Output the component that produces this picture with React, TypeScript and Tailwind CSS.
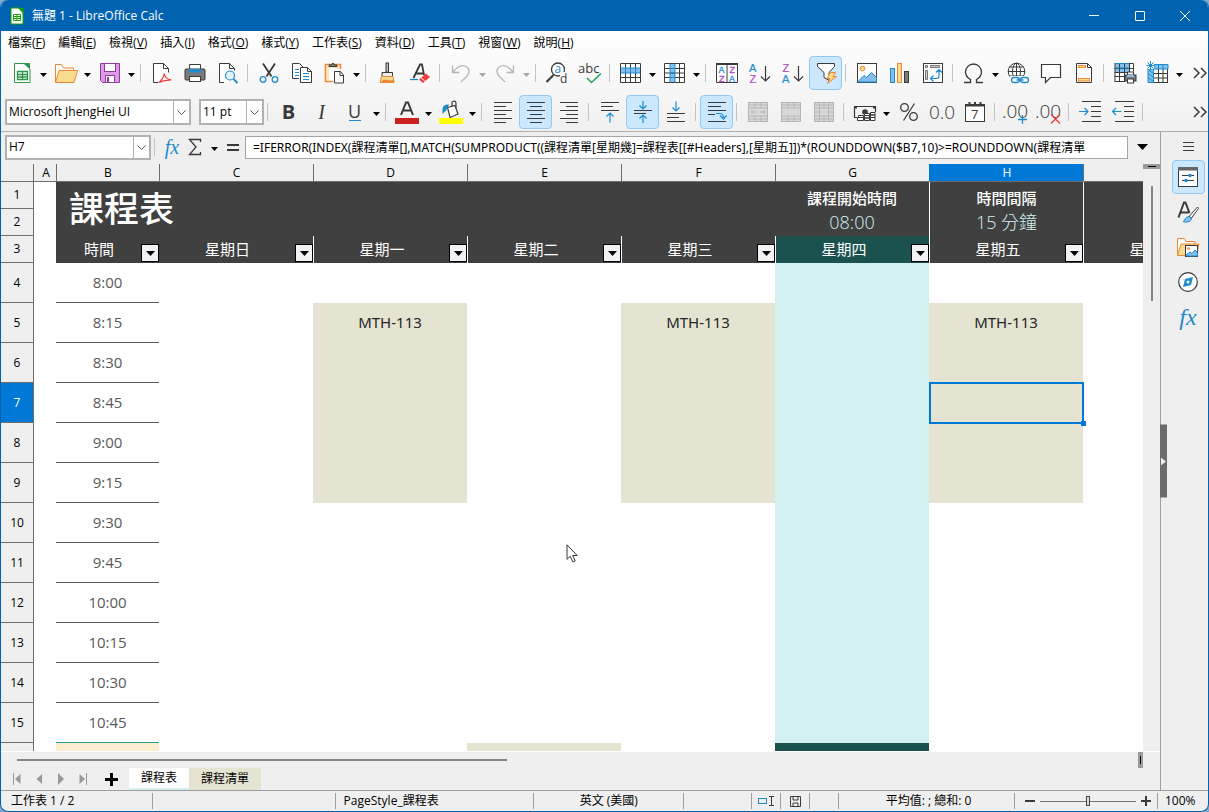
import React from "react";

const DARK = "#3a3a38";
const BLUE = "#1e8bcd";
const SKY = "#83beec";
const ORANGE = "#ed8733";
const SAND = "#f8db8f";
const RED = "#ed3d3b";
const PURPLE = "#b04bbf";
const GRAY = "#b5b5b5";

const FONT = "font-['Open_Sans','Noto_Sans_CJK_TC',sans-serif]";

function Icon({ children }: { children: React.ReactNode }) {
  return (
    <svg viewBox="0 0 24 24" className="h-6 w-6 shrink-0 overflow-visible" fill="none" aria-hidden="true">
      {children}
    </svg>
  );
}

const svgFont = { fontFamily: "'Open Sans', sans-serif" };
const letterFont = { fontFamily: "'Liberation Sans', sans-serif" };

/* ---------- standard toolbar icons ---------- */

const NewSheet = (
  <Icon>
    <path d="M4.500 2.500h9.500l6 5.500v13.500h-15.500z" fill="#fff" stroke="#2e9549" />
    <path d="M13.500 2h6.500v6z" fill="#2e9549" />
    <path d="M7.500 10.500h10v8h-10zM7.500 13.500h10M7.500 16h10M12.500 10.500v8" stroke="#2e9549" strokeWidth="1.300" />
  </Icon>
);
const Folder = (
  <Icon>
    <path d="M1.500 21V3.500h6l2 3.500h10v3" stroke={ORANGE} fill="#fff" />
    <path d="M1.500 21.500l3.500-12h18.500l-3.500 12z" fill={SAND} stroke={ORANGE} />
  </Icon>
);
const Save = (
  <Icon>
    <path d="M2.500 2.500h19v19h-17l-2-2z" fill="#dd9be8" stroke="#95389f" />
    <rect x="6.500" y="2.500" width="11" height="8" fill="#fff" stroke="#95389f" />
    <rect x="7.500" y="14.500" width="9" height="7" fill="#fff" stroke="#95389f" />
    <rect x="9" y="16" width="2" height="5" fill="#95389f" />
  </Icon>
);
const Pdf = (
  <Icon>
    <path d="M8 21.500H3.500v-19h10l5 5v4" fill="#fff" stroke={DARK} />
    <path d="M13.500 2.500v5h5" stroke={DARK} />
    <path d="M8.500 21.500c3-1.500 5.500-6 5.800-9 .3 3.500 2.500 5.800 7 6.300-5 0-9 1-12.800 2.700z" stroke={RED} strokeWidth="1.200" />
  </Icon>
);
const Printer = (
  <Icon>
    <path d="M6.500 8V3.500h11V8" fill="#fff" stroke={DARK} />
    <rect x="2" y="8" width="20" height="11" rx="1" fill="#7b7b7b" stroke={DARK} />
    <rect x="6" y="8" width="12" height="3.500" fill={BLUE} />
    <rect x="6.500" y="15.500" width="11" height="5" fill="#fff" stroke={DARK} />
  </Icon>
);
const Preview = (
  <Icon>
    <path d="M8 21.500H3.500v-19h10l5 5v2" fill="#fff" stroke={DARK} />
    <path d="M13.500 2.500v5h5" stroke={DARK} />
    <circle cx="14" cy="14.500" r="4.500" stroke={BLUE} fill="#e6f2fb" strokeWidth="1.200" />
    <path d="M17.500 18l4 4" stroke={BLUE} strokeWidth="1.800" />
  </Icon>
);
const Cut = (
  <Icon>
    <path d="M6 2.500l8.500 13M18 2.500l-8.500 13" stroke={DARK} strokeWidth="1.800" />
    <circle cx="6" cy="18.500" r="2.800" stroke={BLUE} strokeWidth="1.300" />
    <circle cx="18" cy="18.500" r="2.800" stroke={BLUE} strokeWidth="1.300" />
  </Icon>
);
const Copy = (
  <Icon>
    <path d="M9 17.500H2.500v-15h7l4 4V7" fill="#fff" stroke={DARK} />
    <path d="M5 8.500h4M5 11.500h4M5 14.500h4" stroke={BLUE} />
    <path d="M10.500 6.500h7l4 4v11h-11z" fill="#fff" stroke={DARK} />
    <path d="M17.500 6.500v4h4" stroke={DARK} />
    <path d="M13 12.500h6M13 15.500h6M13 18.500h6" stroke={BLUE} />
  </Icon>
);
const Paste = (
  <Icon>
    <path d="M10 20.500H2.500v-17H17.500V8" fill="#fff" stroke={ORANGE} strokeWidth="1.600" />
    <path d="M5 20V6h10v2" fill="#fff" stroke={SAND} strokeWidth="1.400" />
    <path d="M6 5.500h8V4h-2.500a1.500 1.500 0 0 0-3 0H6z" fill="#8a8a8a" stroke={DARK} />
    <path d="M11.500 10.500h6l3 3.500v8h-9z" fill="#fff" stroke={DARK} />
    <path d="M17 10.500v4h3.500" stroke={DARK} />
  </Icon>
);
const Brush = (
  <Icon>
    <rect x="11" y="2" width="2.500" height="9" fill="#bbb" stroke={DARK} />
    <path d="M7 15.500v-4h10.500v4z" fill="#eee" stroke={DARK} />
    <path d="M6.500 15.500h11.500l1 6H5z" fill={SAND} stroke={ORANGE} />
    <path d="M8 19c4-1 7 2 11-.500v3H6z" fill={ORANGE} />
  </Icon>
);
const ClearFormat = (
  <Icon>
    <path d="M5.500 17L12 3.500h2L16 14M8 12.500h7.500" stroke={DARK} strokeWidth="1.800" />
    <path d="M2 18.500h8" stroke={BLUE} strokeWidth="1.300" />
    <path d="M11 18.500l7-6 4 3.500-7 6z" fill={RED} />
    <path d="M13 16.800l4 3.400" stroke="#fff" />
  </Icon>
);
const Undo = (
  <Icon>
    <path d="M3.500 4.500v7h7M4 11C8 6 12 3.500 16 5c5 2 5 6.500 2 10l-6 6" stroke={GRAY} strokeWidth="1.300" />
  </Icon>
);
const Redo = (
  <Icon>
    <path d="M20.500 4.500v7h-7M20 11C16 6 12 3.500 8 5c-5 2-5 6.500-2 10l6 6" stroke={GRAY} strokeWidth="1.300" />
  </Icon>
);
const Find = (
  <Icon>
    <circle cx="13" cy="8.500" r="6.500" stroke={DARK} strokeWidth="1.300" fill="#fff" />
    <path d="M8.500 14l-7 7" stroke={DARK} strokeWidth="2.200" />
    <text x="9.500" y="12" fontSize="12" fill={BLUE} style={svgFont}>a</text>
    <rect x="15" y="11" width="8" height="11" fill="#fbfbfb" />
    <text x="15" y="22" fontSize="12" fill={DARK} style={svgFont}>d</text>
  </Icon>
);
const Spell = (
  <Icon>
    <text x="0" y="12" fontSize="13" fill={DARK} style={svgFont}>abc</text>
    <path d="M9 17l4.500 4.500L23 12.500" stroke="#21a85a" strokeWidth="1.600" />
  </Icon>
);
const RowIcon = (
  <Icon>
    <rect x="1.500" y="2.500" width="20" height="19" fill="#fff" />
    <rect x="2" y="7" width="20" height="5" fill={SKY} />
    <path d="M1.500 2.500h20v19h-20zM1.500 16.500h20M6.500 2.500v19M11.500 2.500v19M16.500 2.500v19" stroke={DARK} />
    <path d="M1.500 7h20M1.500 12h20M6.500 7v5M11.500 7v5M16.500 7v5" stroke={BLUE} />
  </Icon>
);
const ColIcon = (
  <Icon>
    <rect x="1.500" y="2.500" width="20" height="19" fill="#fff" />
    <rect x="7" y="3" width="5" height="18" fill={SKY} />
    <path d="M1.500 2.500h20v19h-20zM1.500 7.500h20M1.500 12h20M1.500 16.500h20M16.500 2.500v19" stroke={DARK} />
    <path d="M7 2.500v19M12 2.500v19M7 7.500h5M7 12h5M7 16.500h5" stroke={BLUE} />
  </Icon>
);
const SortIcon = (
  <Icon>
    <path d="M1.500 2.500h21v19h-21z" fill="#fff" stroke={DARK} />
    <path d="M1 3h22" stroke={DARK} strokeWidth="2" />
    <path d="M12 2.500v19" stroke={DARK} />
    <text x="3.500" y="12" fontSize="9" fill={BLUE} stroke={BLUE} strokeWidth=".3" style={letterFont}>A</text>
    <text x="4" y="20.500" fontSize="9" fill={PURPLE} stroke={PURPLE} strokeWidth=".3" style={letterFont}>Z</text>
    <text x="14.500" y="12" fontSize="9" fill={PURPLE} stroke={PURPLE} strokeWidth=".3" style={letterFont}>Z</text>
    <text x="14" y="20.500" fontSize="9" fill={BLUE} stroke={BLUE} strokeWidth=".3" style={letterFont}>A</text>
  </Icon>
);
const SortAsc = (
  <Icon>
    <text x="1" y="10.500" fontSize="11" fill={BLUE} stroke={BLUE} strokeWidth=".2" style={letterFont}>A</text>
    <text x="1.500" y="21.500" fontSize="11" fill={PURPLE} stroke={PURPLE} strokeWidth=".2" style={letterFont}>Z</text>
    <path d="M17.500 5v15M13 15.500l4.500 4.500 4.500-4.500" stroke={DARK} strokeWidth="1.200" />
  </Icon>
);
const SortDesc = (
  <Icon>
    <text x="1.500" y="10.500" fontSize="11" fill={PURPLE} stroke={PURPLE} strokeWidth=".2" style={letterFont}>Z</text>
    <text x="1" y="21.500" fontSize="11" fill={BLUE} stroke={BLUE} strokeWidth=".2" style={letterFont}>A</text>
    <path d="M17.500 5v15M13 15.500l4.500 4.500 4.500-4.500" stroke={DARK} strokeWidth="1.200" />
  </Icon>
);
const Filter = (
  <Icon>
    <path d="M3.500 2.500h17v3l-5.500 6v8l-5-3v-5l-6.500-6z" fill="#fff" stroke={DARK} />
    <path d="M16.500 11.500h5l-2.500 4h3.500l-9 7 2.500-5h-3z" fill={SAND} stroke={ORANGE} />
  </Icon>
);
const Picture = (
  <Icon>
    <rect x="2.500" y="2.500" width="19" height="19" fill="#fff" stroke={DARK} />
    <circle cx="7.500" cy="7.500" r="2.300" fill={SAND} stroke={ORANGE} />
    <path d="M3 20.500l6-6 2.500 2 5-5 5 5v4.500H3z" fill={SKY} stroke={BLUE} />
  </Icon>
);
const Chart = (
  <Icon>
    <rect x="2.500" y="7.500" width="4" height="14" fill={SKY} stroke={BLUE} />
    <rect x="9.500" y="2.500" width="4" height="19" fill={SAND} stroke={ORANGE} />
    <rect x="16.500" y="10.500" width="4" height="11" fill="#7b7b7b" stroke={DARK} />
  </Icon>
);
const Pivot = (
  <Icon>
    <rect x="2.500" y="2.500" width="19" height="19" fill="#fff" stroke={DARK} />
    <path d="M4.500 4.500h2v2h-2zM9.500 4.500h9v2h-9zM4.500 9.500h2v9h-2z" fill="#ccc" stroke="#777" />
    <path d="M15 11.500l3-3 3 3M18 9v6c0 1.500-1 2.500-2.500 2.500H9.500M12.500 14.500l-3 3 3 3" stroke={BLUE} strokeWidth="1.200" />
  </Icon>
);
const Omega = (
  <Icon>
    <path d="M2 21.500h6.500v-3C5 16.500 3.500 14 3.500 11a8 8 0 0 1 16 0c0 3-1.500 5.500-5 7.500v3H21" stroke={DARK} strokeWidth="1.300" />
  </Icon>
);
const Link = (
  <Icon>
    <circle cx="10.500" cy="10.500" r="8.300" fill="#fff" stroke={DARK} />
    <ellipse cx="10.500" cy="10.500" rx="4" ry="8.300" stroke={DARK} />
    <path d="M10.500 2v17M2 10.500h17M3.500 6h14M3.500 15h14" stroke={DARK} />
    <rect x="4" y="15" width="20" height="9" fill="#f9f9f9" />
    <rect x="5.500" y="16.500" width="8" height="5" rx="2.500" stroke={BLUE} strokeWidth="1.300" />
    <rect x="14.500" y="16.500" width="8" height="5" rx="2.500" stroke={BLUE} strokeWidth="1.300" />
    <path d="M10.500 19h7" stroke={BLUE} strokeWidth="1.300" />
  </Icon>
);
const Comment = (
  <Icon>
    <path d="M2.500 3.500h19v13H11.500l-5 5v-5h-4z" fill="#fff" stroke={DARK} strokeWidth="1.200" />
  </Icon>
);
const HeaderFooter = (
  <Icon>
    <path d="M4.500 2.500h11l4 4v15h-15z" fill="#fff" stroke={DARK} />
    <path d="M15.500 2.500v4h4" stroke={DARK} />
    <rect x="6.500" y="4.500" width="7" height="2" fill={SAND} stroke={ORANGE} />
    <rect x="6.500" y="17.500" width="11" height="2.500" fill={SAND} stroke={ORANGE} />
  </Icon>
);
const PrintArea = (
  <Icon>
    <rect x="2" y="2" width="18" height="18" fill="#fff" />
    <rect x="2" y="2" width="14" height="9" fill={SKY} />
    <path d="M2 2.500h18.500v8M1.500 7.500h19M1.500 11.500h19M1.500 15.500h10M2 20.500h10M2 2v19M6.500 2v19M11.500 2v19M16.500 2v9" stroke={DARK} />
    <path d="M2 2.500h14M2 7h14" stroke={BLUE} />
    <path d="M14.500 14v-3h6v3" fill="#fff" stroke={DARK} />
    <rect x="12" y="14" width="11" height="6" fill="#7b7b7b" stroke={DARK} />
    <rect x="14" y="14" width="7" height="2" fill={SKY} />
    <rect x="14.500" y="18" width="6" height="4" fill="#fff" stroke={DARK} />
  </Icon>
);
const Freeze = (
  <Icon>
    <rect x="2.500" y="3.500" width="19" height="18" fill="#fff" stroke={DARK} />
    <path d="M8 12.500h13M8 17h13M12.500 8v13M17 8v13" stroke={DARK} />
    <path d="M8 3.500h14V8H8zM2 8h5.500v13.500H2z" fill={SKY} stroke={BLUE} />
    <path d="M12.500 3.500V8M17 3.500V8M2 12.500l5.500 4M2 16.500l5.500 4M2 8.500l5.500 4" stroke={BLUE} />
    <rect x="0" y="0" width="8" height="8" fill="#fbfbfb" />
    <path d="M4.500 0v9M.5 4.500h8M1.500 1.500l6 6M7.500 1.500l-6 6" stroke={BLUE} />
  </Icon>
);

/* ---------- formatting toolbar icons ---------- */

const FontColor = (
  <Icon>
    <path d="M6 15L11 2.500h2L18 15M8 10.500h8" stroke={DARK} strokeWidth="2" />
    <rect x="0" y="18" width="24" height="6" fill="#c9211e" />
  </Icon>
);
const FillColor = (
  <Icon>
    <path d="M8.500 7.500l7.500-2 3 8.500-8 3.500z" fill="#fff" stroke={DARK} strokeWidth="1.200" />
    <path d="M13 7V3.500a2 2 0 0 1 4-.5v5" stroke={DARK} strokeWidth="1.200" />
    <path d="M10 4.500C6 4 3.500 6 3.500 9v5l3.500-3.500L9 7z" fill={BLUE} />
    <rect x="0" y="18" width="24" height="6" fill="#ffff00" />
  </Icon>
);
function Lines({ rows }: { rows: [number, number][] }) {
  return (
    <Icon>
      {rows.map(([x1, x2], i) => (
        <path key={i} d={`M${x1} ${2.5 + i * 4}H${x2}`} stroke={DARK} />
      ))}
    </Icon>
  );
}
const AlignLeft = <Lines rows={[[3, 21], [3, 15], [3, 21], [3, 15], [3, 21], [3, 15]]} />;
const AlignCenter = <Lines rows={[[3, 21], [6, 18], [3, 21], [6, 18], [3, 21], [6, 18]]} />;
const AlignRight = <Lines rows={[[3, 21], [9, 21], [3, 21], [9, 21], [3, 21], [9, 21]]} />;
const AlignTop = (
  <Icon>
    <path d="M3 2.500h18M3 6.500h12M3 10.500h18" stroke={DARK} />
    <path d="M12 22.500V13M8.500 16.500L12 13l3.500 3.500" stroke={BLUE} strokeWidth="1.200" />
  </Icon>
);
const AlignMiddle = (
  <Icon>
    <path d="M3 10.500h18M3 13.500h12" stroke={DARK} />
    <path d="M12 1v7.500M8.500 5.500L12 9l3.500-3.500M12 23v-7.500M8.500 18.500L12 15l3.500 3.500" stroke={BLUE} strokeWidth="1.200" />
  </Icon>
);
const AlignBottom = (
  <Icon>
    <path d="M3 13.500h18M3 17.500h12M3 21.500h18" stroke={DARK} />
    <path d="M12 1.500V11M8.500 7.500L12 11l3.500-3.500" stroke={BLUE} strokeWidth="1.200" />
  </Icon>
);
const Wrap = (
  <Icon>
    <path d="M3 2.500h18M3 6.500h13M3 10.500h18M3 14.500h7M3 21.500h18" stroke={DARK} />
    <path d="M11 13.500h4c2.500 0 3.500 1.500 3.500 5M15 15.500l3.500 3.500 3-3.500" stroke={BLUE} strokeWidth="1.200" />
  </Icon>
);
const Merge1 = (
  <Icon>
    <rect x="2.500" y="2.500" width="19" height="19" fill="#d9d9d9" stroke={GRAY} />
    <path d="M2.500 8h19M2.500 16h19M9 2.500V8M15 2.500V8M9 16v5.500M15 16v5.500M2.500 5h19M2.500 19h19M5 12h5M14 12h5M7 10l-2 2 2 2M17 10l2 2-2 2" stroke={GRAY} />
  </Icon>
);
const Merge2 = (
  <Icon>
    <rect x="2.500" y="2.500" width="19" height="19" fill="#d9d9d9" stroke={GRAY} />
    <path d="M2.500 8h19M2.500 16h19M9 2.500V8M15 2.500V8M9 16v5.500M15 16v5.500M2.500 5h19M2.500 19h19" stroke={GRAY} />
  </Icon>
);
const Merge3 = (
  <Icon>
    <rect x="2.500" y="2.500" width="19" height="19" fill="#d9d9d9" stroke={GRAY} />
    <path d="M2.500 8h19M2.500 16h19M2.500 12h5M16.500 12h5M7.500 2.500v19M16.500 2.500v19M12 2.500V8M12 16v5.500M2.500 5h19M2.500 19h19" stroke={GRAY} />
  </Icon>
);
const Currency = (
  <Icon>
    <path d="M4 17.500H1.500v-11h21V12" stroke={DARK} strokeWidth="1.200" />
    <circle cx="12" cy="12" r="2.800" fill={DARK} />
    <path d="M1 6h3v2.500H1zM20 6h3v2.500h-3z" fill={DARK} />
    <path d="M5.500 15.500h5v2h-5zM4.500 17.500h6v3h-6zM11.500 13.500h5v2h-5zM11.500 15.500h5v2.500h-5zM11.500 18h5v2.500h-5zM17.500 12.500h4.500v2.500h-4.500zM17.500 15h4.500v2.500h-4.500zM17.500 17.500h4.500v3h-4.500z" fill="#fff" stroke={DARK} />
  </Icon>
);
const Percent = (
  <Icon>
    <circle cx="7.500" cy="7.500" r="3.800" stroke={DARK} strokeWidth="1.300" />
    <circle cx="16.500" cy="16.500" r="3.800" stroke={DARK} strokeWidth="1.300" />
    <path d="M17.500 3.500l-11 17" stroke={DARK} strokeWidth="1.300" />
  </Icon>
);
const NumberFmt = (
  <Icon>
    <text x="12" y="19" fontSize="19" textAnchor="middle" fill={DARK} fontWeight="300" style={svgFont}>0.0</text>
  </Icon>
);
const DateFmt = (
  <Icon>
    <rect x="2.500" y="4.500" width="19" height="17" fill="#fff" stroke={DARK} />
    <path d="M2 5.500h20" stroke={DARK} strokeWidth="2" />
    <path d="M6.500 2v4M12 2v4M17.500 2v4" stroke={DARK} strokeWidth="2" />
    <text x="8" y="19" fontSize="13" fill={DARK} style={svgFont}>7</text>
  </Icon>
);
const AddDecimal = (
  <Icon>
    <text x="11" y="18" fontSize="19" textAnchor="middle" fill={DARK} fontWeight="300" style={svgFont}>.00</text>
    <path d="M18.500 15v9M14 19.500h9" stroke={BLUE} strokeWidth="1.300" />
  </Icon>
);
const DelDecimal = (
  <Icon>
    <text x="11" y="18" fontSize="19" textAnchor="middle" fill={DARK} fontWeight="300" style={svgFont}>.00</text>
    <path d="M14 14.500l9 9M23 14.500l-9 9" stroke={RED} strokeWidth="1.300" />
  </Icon>
);
const Indent = (
  <Icon>
    <path d="M4 1.500h19M13 6.500h10M13 11.500h10M13 16.500h10M4 21.500h19" stroke={DARK} />
    <path d="M1 11.500h9M6.500 8l3.500 3.500-3.500 3.500" stroke={BLUE} strokeWidth="1.200" />
  </Icon>
);
const Outdent = (
  <Icon>
    <path d="M4 1.500h19M13 6.500h10M13 11.500h10M13 16.500h10M4 21.500h19" stroke={DARK} />
    <path d="M1.500 11.500h9M5 8l-3.500 3.500L5 15" stroke={BLUE} strokeWidth="1.200" />
  </Icon>
);

/* ---------- sidebar icons ---------- */

const Properties = (
  <Icon>
    <rect x="2.500" y="2.500" width="19" height="19" fill="#fff" stroke={DARK} />
    <rect x="2" y="2" width="20" height="3.500" fill="#666" />
    <path d="M6 10.500h12M6 15.500h12" stroke={DARK} />
    <circle cx="14" cy="10.500" r="1.800" fill={BLUE} />
    <circle cx="10" cy="15.500" r="1.800" fill={BLUE} />
  </Icon>
);
const Styles = (
  <Icon>
    <path d="M2.500 17.500L8 2.500h1.500l4 10.500M5 12.500h7.500" stroke={DARK} strokeWidth="2" />
    <path d="M13 16.500l8.500-9.500 1 1.500-7 9.500z" fill="#fff" stroke={DARK} />
    <path d="M7 21.500c2 0 1.500-4.500 5.500-5l3 2c0 3-4.500 4.500-8.500 3z" fill={SKY} stroke={BLUE} />
  </Icon>
);
const Gallery = (
  <Icon>
    <path d="M1.500 20V3.500h7l1.500 3h9v3" fill="#fff" stroke={ORANGE} />
    <path d="M1.500 20.500l3.500-11.500h18l-3 11.500z" fill={SAND} stroke={ORANGE} />
    <rect x="9.500" y="10.500" width="12" height="11" fill="#fff" stroke={DARK} />
    <circle cx="12.500" cy="13.500" r="1.300" fill={ORANGE} />
    <path d="M10 20l4-3 2 1.500 3-3.500 2.500 3v3H10z" fill={SKY} stroke={BLUE} />
  </Icon>
);
const Navigator = (
  <Icon>
    <circle cx="12" cy="12" r="9.300" fill="#fff" stroke={DARK} strokeWidth="1.200" />
    <path d="M17 7l-2 8-8 2 2-8z" fill={BLUE} />
    <circle cx="12" cy="12" r="1.500" fill="#fff" />
  </Icon>
);

/* ---------- toolbar parts ---------- */

function Tool({ label, active, children }: { label: string; active?: boolean; children: React.ReactNode }) {
  return (
    <button
      type="button"
      aria-label={label}
      title={label}
      className={
        active
          ? "flex h-[34px] w-[33px] shrink-0 items-center justify-center rounded-sm border border-[#90c8f6] bg-[#cce8ff]"
          : "flex h-[34px] w-[33px] shrink-0 items-center justify-center rounded-sm"
      }
    >
      {children}
    </button>
  );
}

function Caret({ label, disabled }: { label: string; disabled?: boolean }) {
  return (
    <button type="button" aria-label={label} className="flex h-[34px] w-[11px] shrink-0 items-center justify-center">
      <svg viewBox="0 0 7 4" className="mt-1 h-1 w-[7px]" aria-hidden="true">
        <path d="M0 0h7L3.500 4z" fill={disabled ? "#a8a8a8" : "#000"} />
      </svg>
    </button>
  );
}

function Sep() {
  return <span className="mr-1 ml-[3px] h-[18px] w-px shrink-0 bg-[#c3c3c3]" />;
}

function More() {
  return (
    <button type="button" aria-label="更多" className="ml-auto flex h-[34px] w-4 shrink-0 items-center justify-center">
      <svg viewBox="0 0 14 12" className="h-3 w-3.5" fill="none" aria-hidden="true">
        <path d="M1 1l5 5-5 5M8 1l5 5-5 5" stroke={DARK} strokeWidth="1.500" />
      </svg>
    </button>
  );
}

function Combo({ value, label, width, height }: { value: string; label: string; width: string; height: string }) {
  return (
    <span className={`relative flex shrink-0 border-2 border-[#b2b2b2] bg-white ${width} ${height}`}>
      <select aria-label={label} className="w-full appearance-none bg-transparent pl-[2px] text-xs text-black outline-none">
        <option>{value}</option>
      </select>
      <span className="pointer-events-none absolute inset-y-0 right-0 flex w-4 items-center justify-center border-l border-[#b2b2b2]">
        <svg viewBox="0 0 9 5" className="h-[5px] w-[9px]" fill="none" aria-hidden="true">
          <path d="M.5.5l4 4 4-4" stroke="#555" />
        </svg>
      </span>
    </span>
  );
}

const menus: [string, string][] = [
  ["檔案", "F"], ["編輯", "E"], ["檢視", "V"], ["插入", "I"], ["格式", "O"], ["樣式", "Y"],
  ["工作表", "S"], ["資料", "D"], ["工具", "T"], ["視窗", "W"], ["說明", "H"],
];

/* ---------- sheet ---------- */

const columns = ["A", "B", "C", "D", "E", "F", "G", "H", ""];
const days = ["星期日", "星期一", "星期二", "星期三", "星期四", "星期五", "星期六"];
const times = ["8:00", "8:15", "8:30", "8:45", "9:00", "9:15", "9:30", "9:45", "10:00", "10:15", "10:30", "10:45"];
const classDays = [1, 3, 5];

function RowHead({ n, selected }: { n: number; selected?: boolean }) {
  return (
    <th
      scope="row"
      className={
        selected
          ? "border-r border-b border-[#6e6e6e] bg-[#0078d7] text-xs font-normal text-white"
          : "border-r border-b border-[#6e6e6e] bg-[#efefef] text-xs font-normal text-black"
      }
    >
      {n}
    </th>
  );
}

function FilterHead({ text }: { text: string }) {
  return (
    <div className="flex h-[27px] items-end pb-px pl-px">
      <span className="flex-1 self-center text-center">{text}</span>
      <button
        type="button"
        aria-label={`篩選 ${text}`}
        className="flex h-[18px] w-[18px] shrink-0 items-center justify-center border border-black bg-[#f3f1f6]"
      >
        <svg viewBox="0 0 9 5" className="h-[5px] w-[9px]" aria-hidden="true">
          <path d="M0 0h9L4.500 5z" fill="#000" />
        </svg>
      </button>
    </div>
  );
}

function Sheet() {
  return (
    <table className="w-[1205px] table-fixed border-separate border-spacing-0 text-[15px] leading-5">
      <colgroup>
        <col className="w-[33px]" />
        <col className="w-[22px]" />
        <col className="w-[103px]" />
        <col className="w-[154px]" />
        <col className="w-[154px]" />
        <col className="w-[154px]" />
        <col className="w-[154px]" />
        <col className="w-[154px]" />
        <col className="w-[154px]" />
        <col className="w-[154px]" />
      </colgroup>
      <thead>
        <tr className="h-[18px] bg-[#efefef] text-xs leading-4">
          <th className="border-r border-b border-[#6e6e6e] p-0" />
          {columns.map((c, i) => (
            <th
              key={i}
              scope="col"
              className={
                c === "H"
                  ? "border-b border-[#6e6e6e] bg-[#0078d7] p-0 pl-0.5 font-normal text-white"
                  : c === "A"
                    ? "border-b border-[#6e6e6e] p-0 pl-0.5 font-normal"
                    : "border-b border-l border-[#6e6e6e] p-0 font-normal"
              }
            >
              {c}
            </th>
          ))}
        </tr>
      </thead>
      <tbody>
        <tr className="h-[27px] text-white">
          <RowHead n={1} />
          <td />
          <td colSpan={5} rowSpan={2} className="bg-[#404040] p-0 pl-[13px] text-[35px] leading-[40px] font-medium">
            課程表
          </td>
          <td className="bg-[#404040] p-0 pt-1 text-center font-medium">課程開始時間</td>
          <td className="border-l border-white bg-[#404040] p-0 pt-1 text-center font-medium">時間間隔</td>
          <td className="border-l border-white bg-[#404040]" />
        </tr>
        <tr className="h-[27px] text-lg leading-6 font-light text-[#d3f0f0]">
          <RowHead n={2} />
          <td />
          <td className="bg-[#404040] p-0 pb-0.5 text-center">08:00</td>
          <td className="border-l border-white bg-[#404040] p-0 pb-0.5 text-center">15 分鐘</td>
          <td className="border-l border-white bg-[#404040]" />
        </tr>
        <tr className="h-[27px] text-white">
          <RowHead n={3} />
          <td />
          <td className="bg-[#404040] p-0"><FilterHead text="時間" /></td>
          {days.map((d, i) => (
            <td
              key={d}
              className={
                i === 0
                  ? "bg-[#404040] p-0"
                  : i === 4
                    ? "border-l border-white bg-[#1b524f] p-0"
                    : "border-l border-white bg-[#404040] p-0"
              }
            >
              <FilterHead text={d} />
            </td>
          ))}
        </tr>
        {times.map((t, r) => (
          <tr key={t} className="h-10">
            <RowHead n={r + 4} selected={r === 3} />
            <td />
            <td
              className={
                r === 11
                  ? "border-b border-[#2a9d96] p-0 pb-0.5 text-center text-[#595959]"
                  : "border-b border-[#595959] p-0 pb-0.5 text-center text-[#595959]"
              }
            >
              {t}
            </td>
            {days.map((d, i) => {
              const busy = classDays.includes(i) && r >= 1 && r <= 5;
              return (
                <td
                  key={d}
                  className={
                    i === 4
                      ? "bg-[#d3f0f0] p-0"
                      : busy && i === 5 && r === 3
                        ? "relative z-10 bg-[#e5e3d1] p-0"
                        : busy
                          ? "bg-[#e5e3d1] p-0 pb-0.5 text-center font-['Noto_Sans',sans-serif] text-[#262626]"
                          : "p-0"
                  }
                >
                  {busy && r === 1 && "MTH-113"}
                  {i === 5 && r === 3 && (
                    <span className="absolute -inset-y-px right-[-1px] left-0 border-2 border-[#0078d7]">
                      <span className="absolute -right-1 -bottom-1 h-[5px] w-[5px] bg-[#0078d7]" />
                    </span>
                  )}
                </td>
              );
            })}
          </tr>
        ))}
        <tr className="h-10">
          <th className="border-r border-[#6e6e6e] bg-[#efefef]" />
          <td />
          <td className="bg-[#fdedd0]" />
          {days.map((d, i) => (
            <td key={d} className={i === 2 ? "bg-[#e5e3d1]" : i === 4 ? "bg-[#1b524f]" : ""} />
          ))}
        </tr>
      </tbody>
    </table>
  );
}

const statusCell = "flex min-w-0 items-center border-r border-[#a0a0a0]";

export default function App() {
  return (
    <div className="h-screen bg-[#7fa9cc]">
      <div className={`flex h-full flex-col overflow-hidden rounded-lg border-x border-b border-[#0063b1] bg-[#efefef] text-xs text-black ${FONT}`}>
        <header className="flex h-[31px] shrink-0 items-center bg-[#0063b1] pl-2 text-white">
          <svg viewBox="0 0 16 18" className="h-[18px] w-4" aria-hidden="true">
            <path d="M2 1h9l3 3.500V17H2z" fill="#fff" stroke="#18a303" />
            <path d="M9 1h5.500v6z" fill="#18a303" />
            <path d="M4.500 7.500h7v6h-7zM4.500 9.500h7M4.500 11.500h7M8 7.500v6" fill="none" stroke="#18a303" />
          </svg>
          <h1 className="ml-[7px] text-xs">無題 1 - LibreOffice Calc</h1>
          <div className="ml-auto flex">
            <button type="button" aria-label="最小化" className="flex h-[31px] w-[46px] items-center justify-center">
              <span className="h-px w-[10px] bg-white" />
            </button>
            <button type="button" aria-label="最大化" className="flex h-[31px] w-[45px] items-center justify-center">
              <span className="h-[10px] w-[10px] rounded-[1px] border border-white" />
            </button>
            <button type="button" aria-label="關閉" className="flex h-[31px] w-[46px] items-center justify-center">
              <svg viewBox="0 0 10 10" className="h-[10px] w-[10px]" aria-hidden="true">
                <path d="M0 0l10 10M10 0L0 10" stroke="#fff" />
              </svg>
            </button>
          </div>
        </header>

        <div className="shrink-0 border-b border-[#b0b0b0] bg-linear-to-b from-white to-[#f0f0f0]">
          <nav className="flex h-6 items-center gap-[13px] pl-[7px]">
            {menus.map(([name, key]) => (
              <button key={key} type="button" className="whitespace-nowrap">
                {name}(<span className="underline">{key}</span>)
              </button>
            ))}
          </nav>

          <div className="flex h-9 items-center pl-1" role="toolbar" aria-label="標準">
            <Tool label="新增">{NewSheet}</Tool><Caret label="新增選項" />
            <Tool label="開啟">{Folder}</Tool><Caret label="開啟選項" />
            <Tool label="儲存">{Save}</Tool><Caret label="儲存選項" />
            <Sep />
            <Tool label="匯出 PDF">{Pdf}</Tool>
            <Tool label="列印">{Printer}</Tool>
            <Tool label="預覽列印">{Preview}</Tool>
            <Sep />
            <Tool label="剪下">{Cut}</Tool>
            <Tool label="複製">{Copy}</Tool>
            <Tool label="貼上">{Paste}</Tool><Caret label="貼上選項" />
            <Sep />
            <Tool label="仿製格式">{Brush}</Tool>
            <Tool label="清除格式">{ClearFormat}</Tool>
            <Sep />
            <Tool label="復原">{Undo}</Tool><Caret label="復原選項" disabled />
            <Tool label="重做">{Redo}</Tool><Caret label="重做選項" disabled />
            <Sep />
            <Tool label="尋找與取代">{Find}</Tool>
            <Tool label="拼字檢查">{Spell}</Tool>
            <Sep />
            <Tool label="列">{RowIcon}</Tool><Caret label="列選項" />
            <Tool label="欄">{ColIcon}</Tool><Caret label="欄選項" />
            <Sep />
            <Tool label="排序">{SortIcon}</Tool>
            <Tool label="遞增排序">{SortAsc}</Tool>
            <Tool label="遞減排序">{SortDesc}</Tool>
            <Tool label="自動篩選" active>{Filter}</Tool>
            <Sep />
            <Tool label="插入影像">{Picture}</Tool>
            <Tool label="插入圖表">{Chart}</Tool>
            <Tool label="樞紐分析表">{Pivot}</Tool>
            <Sep />
            <Tool label="特殊字元">{Omega}</Tool><Caret label="特殊字元選項" />
            <Tool label="超連結">{Link}</Tool>
            <Tool label="註解">{Comment}</Tool>
            <Tool label="頁首與頁尾">{HeaderFooter}</Tool>
            <Sep />
            <Tool label="列印範圍">{PrintArea}</Tool>
            <Tool label="凍結">{Freeze}</Tool><Caret label="凍結選項" />
            <More />
          </div>

          <div className="flex h-10 items-center pt-0.5 pl-1" role="toolbar" aria-label="格式">
            <Combo label="字型名稱" value="Microsoft JhengHei UI" width="w-[186px]" height="h-[26px]" />
            <span className="w-2 shrink-0" />
            <Combo label="字型大小" value="11 pt" width="w-[65px]" height="h-[26px]" />
            <Sep />
            <Tool label="粗體"><span className="text-xl font-bold text-[#3a3a38]">B</span></Tool>
            <Tool label="斜體"><span className="font-['Liberation_Serif',serif] text-xl text-[#3a3a38] italic">I</span></Tool>
            <Tool label="底線">
              <span className="flex flex-col items-center text-lg leading-[17px] font-medium text-[#3a3a38]">
                U
                <span className="h-px w-3 bg-[#1e8bcd]" />
              </span>
            </Tool>
            <Caret label="底線選項" />
            <Sep />
            <Tool label="字型色彩">{FontColor}</Tool><Caret label="字型色彩選項" />
            <Tool label="背景色彩">{FillColor}</Tool><Caret label="背景色彩選項" />
            <Sep />
            <Tool label="靠左">{AlignLeft}</Tool>
            <Tool label="置中" active>{AlignCenter}</Tool>
            <Tool label="靠右">{AlignRight}</Tool>
            <Sep />
            <Tool label="靠上">{AlignTop}</Tool>
            <Tool label="垂直置中" active>{AlignMiddle}</Tool>
            <Tool label="靠下">{AlignBottom}</Tool>
            <Sep />
            <Tool label="文字換行" active>{Wrap}</Tool>
            <Sep />
            <Tool label="合併並置中">{Merge1}</Tool>
            <Tool label="合併儲存格">{Merge2}</Tool>
            <Tool label="分割儲存格">{Merge3}</Tool>
            <Sep />
            <Tool label="貨幣">{Currency}</Tool><Caret label="貨幣選項" />
            <Tool label="百分比">{Percent}</Tool>
            <Tool label="數字">{NumberFmt}</Tool>
            <Tool label="日期">{DateFmt}</Tool>
            <Sep />
            <Tool label="增加小數位">{AddDecimal}</Tool>
            <Tool label="刪除小數位">{DelDecimal}</Tool>
            <Sep />
            <Tool label="增加縮排">{Indent}</Tool>
            <Tool label="減少縮排">{Outdent}</Tool>
            <Sep />
            <More />
          </div>
        </div>

        <div className="flex min-h-0 flex-1">
          <main className="flex min-w-0 flex-1 flex-col">
            <div className="flex h-8 shrink-0 items-center pb-0.5 pl-1">
              <Combo label="名稱方塊" value="H7" width="w-[146px]" height="h-[25px]" />
              <Sep />
              <button type="button" aria-label="函式精靈" className="ml-[3px] w-5 font-['Liberation_Serif',serif] text-xl leading-6 text-[#1e8bcd] italic">fx</button>
              <button type="button" aria-label="選取函式" className="ml-[5px] flex w-4 justify-center">
                <svg viewBox="0 0 14 18" className="h-[18px] w-3.5" fill="none" aria-hidden="true">
                  <path d="M12.500 4V1.500H1.500L8 9l-6.500 7.500h11V14" stroke={DARK} strokeWidth="1.300" />
                </svg>
              </button>
              <span className="ml-1.5 flex"><Caret label="函式選項" /></span>
              <button type="button" aria-label="公式" className="ml-[7px] flex w-3 flex-col gap-[3px]">
                <span className="h-0.5 w-full bg-[#3a3a38]" />
                <span className="h-0.5 w-full bg-[#3a3a38]" />
              </button>
              <input
                aria-label="輸入列"
                className="ml-1.5 h-[23px] min-w-0 flex-1 border border-[#a5a5a5] bg-white px-[7px] font-['Noto_Sans','Noto_Sans_CJK_TC',sans-serif] text-xs outline-none"
                defaultValue="=IFERROR(INDEX(課程清單[],MATCH(SUMPRODUCT((課程清單[星期幾]=課程表[[#Headers],[星期五]])*(ROUNDDOWN($B7,10)>=ROUNDDOWN(課程清單"
              />
              <button type="button" aria-label="展開" className="flex w-[32px] justify-center pr-1">
                <svg viewBox="0 0 11 6" className="h-1.5 w-[11px]" aria-hidden="true">
                  <path d="M0 0h11L5.500 6z" fill="#000" />
                </svg>
              </button>
            </div>

            <div className="flex min-h-0 flex-1">
              <div className="relative min-w-0 flex-1 overflow-hidden bg-white">
                <Sheet />
                <svg viewBox="0 0 13 19" className="absolute top-[380px] left-[565px] h-[19px] w-[13px]" aria-hidden="true">
                  <path d="M1 .8v14.500l3.300-3 2.500 5.700 2.400-1-2.500-5.500h4.500z" fill="#fff" stroke="#222" strokeWidth=".9" />
                </svg>
              </div>
              <div className="flex w-[17px] shrink-0 flex-col items-center">
                <span className="flex h-[5px] w-full items-center justify-center bg-[#9a9a9a]">
                  <span className="h-px w-2 bg-black" />
                </span>
                <span className="mt-[17px] h-[115px] w-0.5 bg-[#858585]" />
              </div>
            </div>

            <div className="flex h-[17px] shrink-0 items-center border-t border-white pl-4">
              <span className="h-0.5 w-[490px] bg-[#858585]" />
              <span className="mr-[17px] ml-auto flex h-full w-[5px] items-center justify-center bg-[#9a9a9a]">
                <span className="h-2 w-px bg-black" />
              </span>
            </div>

            <div className="flex h-[22px] shrink-0 items-stretch">
              <div className="flex w-[92px] items-center gap-[14px] pl-3">
                <button type="button" aria-label="第一張">
                  <svg viewBox="0 0 8 12" className="h-3 w-2" aria-hidden="true"><path d="M.5 0v12" stroke="#999" /><path d="M7.500 1v10L2 6z" fill="#999" /></svg>
                </button>
                <button type="button" aria-label="上一張">
                  <svg viewBox="0 0 8 12" className="h-3 w-2" aria-hidden="true"><path d="M7 1v10L1.500 6z" fill="#999" /></svg>
                </button>
                <button type="button" aria-label="下一張">
                  <svg viewBox="0 0 8 12" className="h-3 w-2" aria-hidden="true"><path d="M1 0v12l6-6z" fill="#999" /></svg>
                </button>
                <button type="button" aria-label="最後一張">
                  <svg viewBox="0 0 8 12" className="h-3 w-2" aria-hidden="true"><path d="M7.500 0v12" stroke="#999" /><path d="M.5 1v10L6 6z" fill="#999" /></svg>
                </button>
              </div>
              <button type="button" aria-label="新增工作表" className="flex w-9 items-center justify-center">
                <svg viewBox="0 0 13 13" className="h-[13px] w-[13px]" aria-hidden="true"><path d="M6.500 0v13M0 6.500h13" stroke="#000" strokeWidth="3" /></svg>
              </button>
              <button type="button" className="border-b-2 border-[#d3f0f0] bg-white px-3">課程表</button>
              <button type="button" className="bg-[#e5e3d1] px-3">課程清單</button>
            </div>
          </main>

          <aside className="relative flex w-12 shrink-0 flex-col items-center border-l border-[#a0a0a0] pl-[7px]">
            <button type="button" aria-label="側邊欄設定" className="flex h-[28px] w-8 items-center justify-center">
              <svg viewBox="0 0 11 9" className="h-[9px] w-[11px]" aria-hidden="true"><path d="M0 .5h11M0 4.500h11M0 8.500h11" stroke="#3a3a38" /></svg>
            </button>
            <div className="flex flex-col gap-px">
              <Tool label="屬性" active>{Properties}</Tool>
              <Tool label="樣式">{Styles}</Tool>
              <Tool label="圖庫">{Gallery}</Tool>
              <Tool label="導覽">{Navigator}</Tool>
              <Tool label="函式"><span className="font-['Liberation_Serif',serif] text-2xl leading-6 text-[#1e8bcd] italic">fx</span></Tool>
            </div>
            <button type="button" aria-label="隱藏側邊欄" className="absolute top-1/2 -left-px flex h-[73px] w-[7px] -translate-y-1/2 items-center bg-[#6b6b6b]">
              <svg viewBox="0 0 6 8" className="h-2 w-1.5" aria-hidden="true"><path d="M1 0v8l5-4z" fill="#efefef" /></svg>
            </button>
          </aside>
        </div>

        <footer className="grid h-[21px] shrink-0 grid-cols-[152fr_183fr_199fr_150fr_68px_29px_29px_29px_176fr_143px_50px] border-t border-[#a0a0a0] py-[2px] whitespace-nowrap">
          <span className={`${statusCell} pl-2.5`}>工作表 1 / 2</span>
          <span className={statusCell} />
          <span className={`${statusCell} pl-2`}>PageStyle_課程表</span>
          <span className={`${statusCell} justify-center`}>英文 (美國)</span>
          <span className={statusCell} />
          <span className={`${statusCell} justify-center`}>
            <svg viewBox="0 0 18 12" className="h-3 w-[18px]" fill="none" aria-hidden="true">
              <rect x="1.500" y="3.500" width="8" height="5" stroke={BLUE} />
              <path d="M12 1.500h5M14.500 1.500v9M12 10.500h5" stroke={DARK} />
            </svg>
          </span>
          <span className={`${statusCell} justify-center`}>
            <svg viewBox="0 0 11 11" className="h-[11px] w-[11px]" fill="none" aria-hidden="true">
              <path d="M.5.5h10v10h-10zM3 1v3h5V1M3 10V7h5v3" stroke={DARK} />
            </svg>
          </span>
          <span className={statusCell} />
          <span className={`${statusCell} justify-center pl-1`}>平均值: ; 總和: 0</span>
          <span className={`${statusCell} gap-[5px] pr-[6px] pl-[10px]`}>
            <button type="button" aria-label="縮小" className="h-0.5 w-2.5 bg-[#3a3a38]" />
            <label className="relative flex h-full flex-1 items-center">
              <input type="range" aria-label="縮放" defaultValue={50} className="peer absolute inset-0 w-full opacity-0" />
              <span className="h-px w-full bg-[#777]" />
              <span className="pointer-events-none absolute left-1/2 h-[10px] w-1 -translate-x-1/2 border border-[#444] bg-[#ddd]" />
            </label>
            <button type="button" aria-label="放大">
              <svg viewBox="0 0 10 10" className="h-2.5 w-2.5" aria-hidden="true"><path d="M5 0v10M0 5h10" stroke={DARK} strokeWidth="2" /></svg>
            </button>
          </span>
          <span className="flex items-center pl-[7px]">100%</span>
        </footer>
      </div>
    </div>
  );
}
